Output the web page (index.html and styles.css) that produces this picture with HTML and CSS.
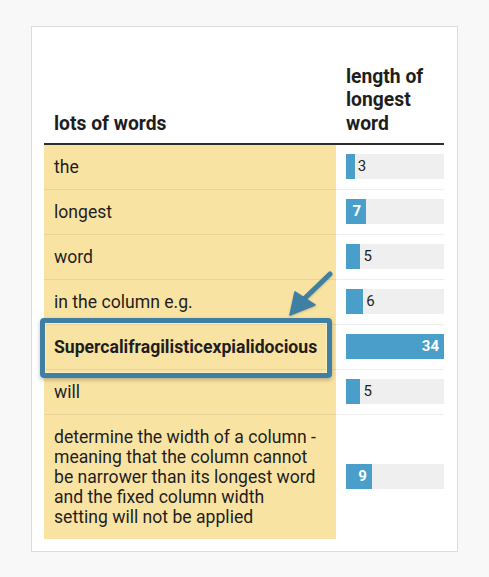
FILE: index.html
```html
<!DOCTYPE html>
<html lang="en">
<head>
<meta charset="utf-8">
<title>lots of words</title>
<link rel="stylesheet" href="styles.css">
</head>
<body>
<div class="card">
  <div class="wrap">
    <table class="tbl">
      <thead>
        <tr>
          <th class="c-words">lots of words</th>
          <th class="c-len">length of longest word</th>
        </tr>
      </thead>
      <tbody>
        <tr>
          <td class="c-words">the</td>
          <td class="c-len"><div class="bar"><div class="fill" style="width:8.82%"></div><span class="lbl out">3</span></div></td>
        </tr>
        <tr>
          <td class="c-words">longest</td>
          <td class="c-len"><div class="bar"><div class="fill" style="width:20.59%"><span class="lbl in">7</span></div></div></td>
        </tr>
        <tr>
          <td class="c-words">word</td>
          <td class="c-len"><div class="bar"><div class="fill" style="width:14.71%"></div><span class="lbl out">5</span></div></td>
        </tr>
        <tr>
          <td class="c-words">in the column e.g.</td>
          <td class="c-len"><div class="bar"><div class="fill" style="width:17.65%"></div><span class="lbl out">6</span></div></td>
        </tr>
        <tr>
          <td class="c-words strong">Supercalifragilisticexpialidocious</td>
          <td class="c-len"><div class="bar"><div class="fill" style="width:100%"><span class="lbl in">34</span></div></div></td>
        </tr>
        <tr>
          <td class="c-words">will</td>
          <td class="c-len"><div class="bar"><div class="fill" style="width:14.71%"></div><span class="lbl out">5</span></div></td>
        </tr>
        <tr class="last">
          <td class="c-words">determine the width of a column - meaning that the column cannot be narrower than its longest word and the fixed column width setting will not be applied</td>
          <td class="c-len"><div class="bar"><div class="fill" style="width:26.47%"><span class="lbl in">9</span></div></div></td>
        </tr>
      </tbody>
    </table>
    <div class="highlight"></div>
    <svg class="arrow" width="54" height="54" viewBox="0 0 54 54" aria-hidden="true">
      <line x1="46" y1="7" x2="19" y2="33" stroke="#3e7fa3" stroke-width="5" stroke-linecap="round"/>
      <polygon points="6,48 11,25 31,38" fill="#3e7fa3" stroke="#3e7fa3" stroke-width="1.5" stroke-linejoin="round"/>
    </svg>
  </div>
</div>
</body>
</html>
```

FILE: styles.css
```css
html, body {
  margin: 0;
  padding: 0;
  background: #f8f8f8;
}

body {
  font-family: Roboto, "Liberation Sans", Arial, sans-serif;
  color: #1e1e1e;
  padding: 26px 0 0 31px;
}

.card {
  width: 400px;
  background: #fff;
  border: 1px solid #dcdcdc;
  padding: 12px 13px 12px 12px;
}

.wrap {
  position: relative;
}

.tbl {
  width: 400px;
  border-collapse: collapse;
  table-layout: fixed;
}

.tbl th {
  font-size: 19.3px;
  line-height: 23.3px;
  font-weight: 700;
  text-align: left;
  vertical-align: bottom;
  padding: 26px 0 8px 10px;
  border-bottom: 2px solid #2e2e2e;
}

.tbl th.c-words {
  width: 282px;
}

.tbl th.c-len {
  width: 98px;
}

.tbl td {
  font-size: 17.6px;
  line-height: 20px;
  padding: 12px 0 12px 10px;
  vertical-align: middle;
  border-bottom: 1px solid rgba(0, 0, 0, 0.065);
}

.tbl td.c-words {
  background: #f9e3a3;
  padding-right: 18px;
}

.tbl td.c-len {
  padding-top: 0;
  padding-bottom: 0;
}

.tbl tr.last td {
  border-bottom: none;
}

.strong {
  font-weight: 700;
}

.bar {
  display: flex;
  align-items: center;
  height: 25px;
  background: #efefef;
}

.fill {
  height: 100%;
  background: #4a9fca;
  display: flex;
  align-items: center;
  justify-content: flex-end;
  flex: none;
}

.lbl {
  font-size: 15px;
  line-height: 25px;
}

.lbl.out {
  color: #1e1e1e;
  padding-left: 3px;
}

.lbl.in {
  color: #fff;
  font-weight: 700;
  padding-right: 5px;
}

.highlight {
  position: absolute;
  left: -4px;
  top: 279px;
  width: 282px;
  height: 50px;
  border: 5px solid #3e7fa3;
  border-radius: 4px;
  box-shadow: 0 2px 4px rgba(0, 0, 0, 0.25), inset 0 0 0 1px rgba(255, 255, 255, 0.35);
}

.arrow {
  position: absolute;
  left: 240px;
  top: 228px;
  filter: drop-shadow(0 1px 1px rgba(0, 0, 0, 0.2));
}
```
